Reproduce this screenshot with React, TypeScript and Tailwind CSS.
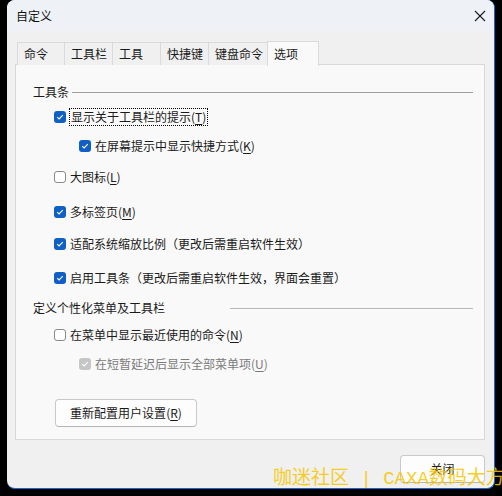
import React from 'react';

const FONT = { fontFamily: '"Segoe UI", "Noto Sans CJK SC", "Noto Sans", sans-serif' };

const Mn: React.FC<{ k: string }> = ({ k }) => (
  <span>
    (<span className="underline underline-offset-2">{k}</span>)
  </span>
);

const Box: React.FC<{ checked?: boolean; disabled?: boolean }> = ({ checked, disabled }) => {
  if (!checked) {
    return <span className="w-[12px] h-[12px] rounded-[3px] border border-[#8a8a8a] bg-white shrink-0" />;
  }
  return (
    <span
      className={
        'w-[12px] h-[12px] rounded-[3px] shrink-0 flex items-center justify-center ' +
        (disabled ? 'bg-[#c6c6c6]' : 'bg-[#0f5fc4]')
      }
    >
      <svg width="8" height="8" viewBox="0 0 8 8">
        <polyline points="1.2,4.2 3.1,6 6.8,2.2" fill="none" stroke="white" strokeWidth="1.1" />
      </svg>
    </span>
  );
};

interface RowProps {
  checked?: boolean;
  disabled?: boolean;
  indent?: boolean;
  focus?: boolean;
  mt: string;
  children: React.ReactNode;
}

const Row: React.FC<RowProps> = ({ checked, disabled, indent, focus, mt, children }) => (
  <div className={'flex items-center h-[18px] ' + mt + (indent ? ' pl-[63px]' : ' pl-[38px]')}>
    <Box checked={checked} disabled={disabled} />
    <span
      className={
        'ml-[3px] leading-[16px] whitespace-nowrap ' +
        (focus ? 'border border-dotted border-black px-[1px] ' : 'px-[1px] ') +
        (disabled ? 'text-[#7b7b7b]' : 'text-[#1a1a1a]')
      }
    >
      {children}
    </span>
  </div>
);

const tabs = [
  { label: '命令', w: 'w-[48px]' },
  { label: '工具栏', w: 'w-[49px]' },
  { label: '工具', w: 'w-[49px]' },
  { label: '快捷键', w: 'w-[49px]' },
  { label: '键盘命令', w: 'w-[60px]' },
];

export default function App() {
  return (
    <div className="relative w-[502px] h-[496px] bg-black overflow-hidden text-[12px]" style={FONT}>
      <div className="ml-[7px] w-[488px] h-[489px] rounded-[8px] border-r border-b border-[#1668d0] bg-[#f0f0f0] overflow-hidden flex flex-col">
        {/* title bar */}
        <div className="h-[31px] bg-[#eef2f7] flex items-center justify-between pl-[9px] pr-[7px] shrink-0">
          <span className="text-[#111]">自定义</span>
          <svg width="12" height="12" viewBox="0 0 12 12" className="mr-[1px]">
            <path d="M1 1 L11 11 M11 1 L1 11" stroke="#1b1b1b" strokeWidth="1.1" />
          </svg>
        </div>

        {/* tabs */}
        <div className="mt-[9px] ml-[8px] w-[470px] flex items-end pl-[2px] h-[25px] relative z-10">
          {tabs.map((t) => (
            <div
              key={t.label}
              className={t.w + ' h-[23px] -mr-px border border-b-0 border-[#dadada] bg-[#f0f0f0] pl-[6px] flex items-center text-[#1a1a1a]'}
            >
              {t.label}
            </div>
          ))}
          <div className="w-[52px] h-[25px] -mb-px border border-b-0 border-[#dadada] bg-[#f9f9f9] pl-[6px] flex items-center text-[#1a1a1a]">
            选项
          </div>
        </div>

        {/* panel */}
        <div className="ml-[8px] w-[470px] h-[376px] -mt-px border border-[#d9d9d9] bg-[#f9f9f9] flex flex-col">
          <div className="mt-[19px] h-[16px] flex items-center pl-[17px] pr-[11px]">
            <span className="text-[#1a1a1a] leading-[16px]">工具条</span>
            <div className="flex-1 ml-[3px] h-px bg-[#a0a0a0]" />
          </div>
          <Row checked focus mt="mt-[8px]">
            显示关于工具栏的提示<Mn k="T" />
          </Row>
          <Row checked indent mt="mt-[11px]">
            在屏幕提示中显示快捷方式<Mn k="K" />
          </Row>
          <Row mt="mt-[13px]">
            大图标<Mn k="L" />
          </Row>
          <Row checked mt="mt-[17px]">
            多标签页<Mn k="M" />
          </Row>
          <Row checked mt="mt-[14px]">
            适配系统缩放比例（更改后需重启软件生效）
          </Row>
          <Row checked mt="mt-[16px]">
            启用工具条（更改后需重启软件生效，界面会重置）
          </Row>
          <div className="mt-[13px] h-[16px] flex items-center pl-[17px] pr-[11px]">
            <span className="text-[#1a1a1a] leading-[16px] w-[197px]">定义个性化菜单及工具栏</span>
            <div className="flex-1 h-px bg-[#b8b8b8]" />
          </div>
          <Row mt="mt-[10px]">
            在菜单中显示最近使用的命令<Mn k="N" />
          </Row>
          <Row checked disabled indent mt="mt-[11px]">
            在短暂延迟后显示全部菜单项<Mn k="U" />
          </Row>
          <div className="mt-[26px] pl-[39px]">
            <button className="w-[142px] h-[28px] rounded-[4px] border border-[#c9c9c9] border-b-[#b5b5b5] bg-[#fdfdfd] text-[#1a1a1a] text-[12px]">
              重新配置用户设置<Mn k="R" />
            </button>
          </div>
        </div>

        {/* footer */}
        <div className="mt-[15px] ml-[8px] w-[470px] flex justify-end">
          <button className="w-[85px] h-[28px] rounded-[4px] border border-[#c9c9c9] border-b-[#b5b5b5] bg-[#fdfdfd] text-[#1a1a1a] text-[12px]">
            关闭
          </button>
        </div>
      </div>

      {/* watermark */}
      <div
        className="absolute left-[273px] top-[468px] text-[19px] leading-[22px] whitespace-nowrap text-[#f7c600]/85 pointer-events-none"
        style={{ fontFamily: '"Liberation Mono", "Noto Sans CJK SC", monospace' }}
      >
        咖迷社区 | CAXA数码大方
      </div>
    </div>
  );
}
